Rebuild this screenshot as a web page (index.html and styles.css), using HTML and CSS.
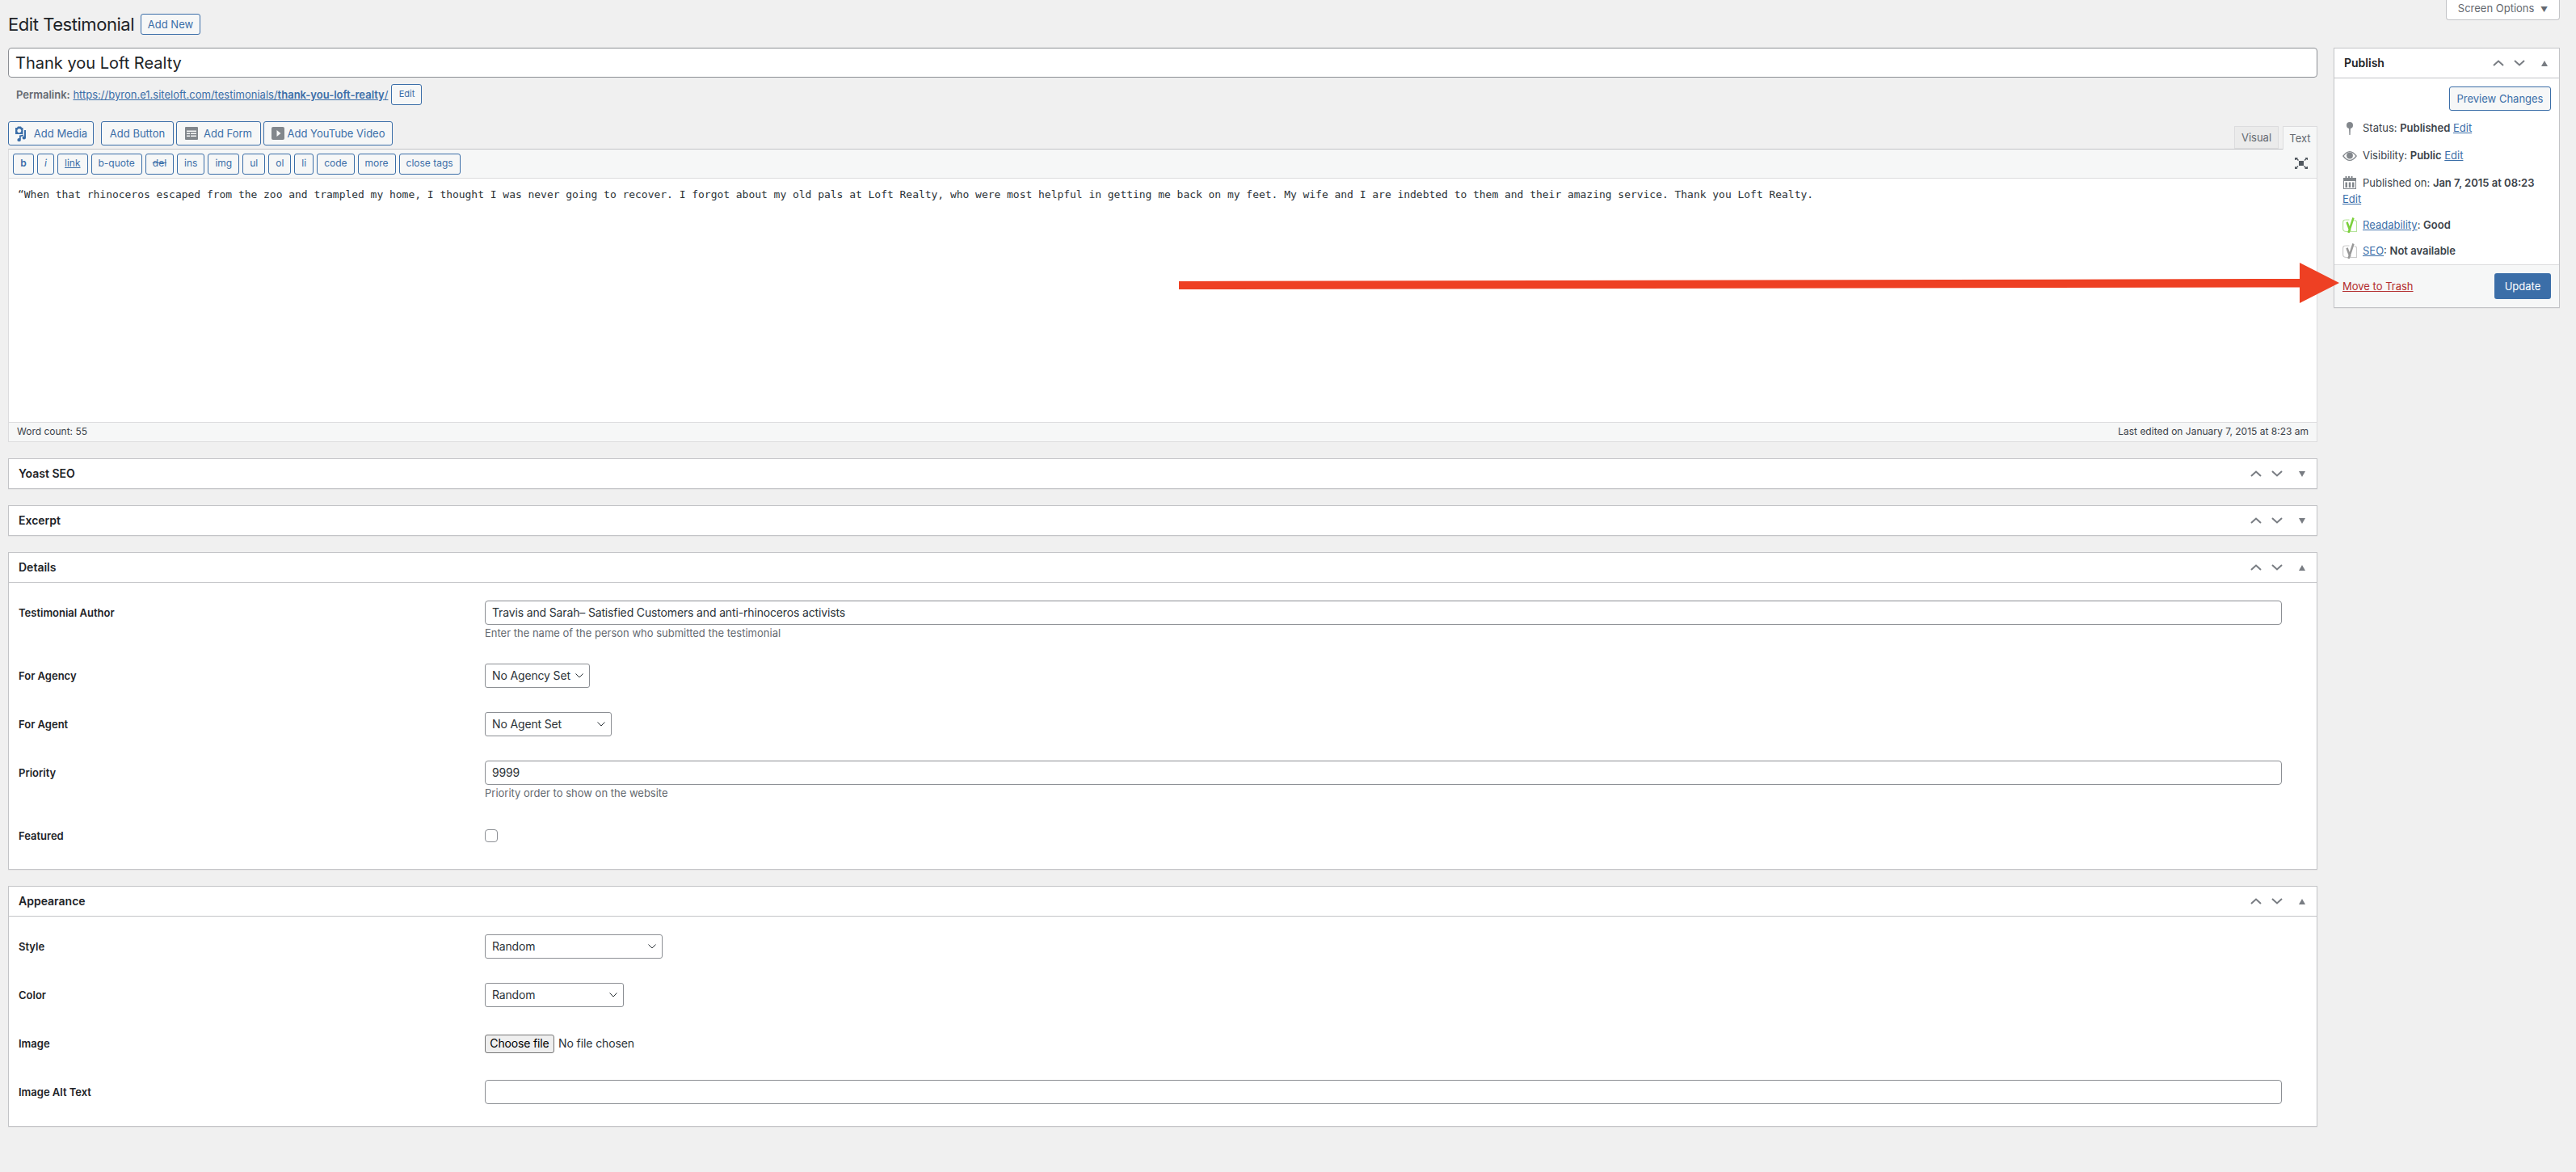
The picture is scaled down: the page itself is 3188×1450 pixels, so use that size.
FILE: index.html
```html
<!DOCTYPE html>
<html lang="en">
<head>
<meta charset="utf-8">
<title>Edit Testimonial</title>
<link rel="stylesheet" href="styles.css">
</head>
<body>
<div class="screen-meta"><button class="screen-options">Screen Options <span class="caret">▼</span></button></div>
<header class="page-head"><h1>Edit Testimonial</h1><a class="btn add-new">Add New</a></header>
<div class="columns">
  <main class="main">
    <div class="title-input">Thank you Loft Realty</div>
    <div class="permalink"><span><b>Permalink:</b> <a class="link">https://byron.e1.siteloft.com/testimonials/<b>thank-you-loft-realty</b>/</a></span><a class="btn small edit-slug">Edit</a></div>
    <div class="editor-head">
      <div class="media-buttons">
        <a class="btn media add-media"><svg class="mi" viewBox="0 0 16 20" width="16" height="20"><path fill="#3b6ea8" fill-rule="evenodd" d="M1 3h2l1-1.500h4L9 3h1.500v8H1zM5.800 4.300a2.500 2.500 0 1 0 .01 0z"/><path fill="#3b6ea8" d="M12 6h2v9.500a2.200 2 0 1 1-2-2zM6 12.500l5-1v1.800l-3.200.7v4a2.200 2 0 1 1-1.800-1.900z"/></svg>Add Media</a>
        <a class="btn media add-button">Add Button</a>
        <a class="btn media add-form"><svg class="mi" viewBox="0 0 16 16" width="16" height="16"><rect width="16" height="16" rx="1" fill="#82878c"/><path fill="#f6f7f7" d="M2 4.500h12V6H2zM2 7.500h4V9H2zM7 7.500h7V9H7zM2 10.500h4V12H2zM7 10.500h7V12H7z"/></svg>Add Form</a>
        <a class="btn media add-yt"><svg class="mi" viewBox="0 0 16 16" width="16" height="16"><rect width="16" height="16" rx="2" fill="#82878c"/><path fill="#f6f7f7" d="M6.500 4l5 4-5 4z"/></svg>Add YouTube Video</a>
      </div>
      <div class="tabs"><span class="tab">Visual</span><span class="tab active">Text</span></div>
    </div>
    <div class="editor">
      <div class="toolbar">
        <a class="qt b-b">b</a><a class="qt b-i">i</a><a class="qt b-u">link</a><a class="qt">b-quote</a><a class="qt b-s">del</a><a class="qt">ins</a><a class="qt">img</a><a class="qt">ul</a><a class="qt">ol</a><a class="qt">li</a><a class="qt">code</a><a class="qt">more</a><a class="qt">close tags</a>
        <svg class="fullscreen" viewBox="0 0 16 14" width="16" height="14"><path fill="#50575e" d="M5 4h6v6H5zM0 0h4L3 1l2 2-1 1-2-2-1 1H0zM16 0v3h-.5l-1-1-2 2-1-1 2-2-1-1zM0 14v-3h.5l1 1 2-2 1 1-2 2 1 1zM16 14h-4l1-1-2-2 1-1 2 2 1-1h1z"/></svg>
      </div>
      <div class="editor-text">“When that rhinoceros escaped from the zoo and trampled my home, I thought I was never going to recover. I forgot about my old pals at Loft Realty, who were most helpful in getting me back on my feet. My wife and I are indebted to them and their amazing service. Thank you Loft Realty.</div>
      <div class="status"><span>Word count: 55</span><span>Last edited on January 7, 2015 at 8:23 am</span></div>
    </div>

    <section class="box collapsed"><div class="box-head"><h2>Yoast SEO</h2><div class="handles"><svg class="h" viewBox="0 0 14 8"><path d="M1 7l6-5.500L13 7"/></svg><svg class="h" viewBox="0 0 14 8"><path d="M1 1l6 5.500L13 1"/></svg><span class="tri down"></span></div></div></section>
    <section class="box collapsed"><div class="box-head"><h2>Excerpt</h2><div class="handles"><svg class="h" viewBox="0 0 14 8"><path d="M1 7l6-5.500L13 7"/></svg><svg class="h" viewBox="0 0 14 8"><path d="M1 1l6 5.500L13 1"/></svg><span class="tri down"></span></div></div></section>

    <section class="box">
      <div class="box-head"><h2>Details</h2><div class="handles"><svg class="h" viewBox="0 0 14 8"><path d="M1 7l6-5.500L13 7"/></svg><svg class="h" viewBox="0 0 14 8"><path d="M1 1l6 5.500L13 1"/></svg><span class="tri up"></span></div></div>
      <div class="fields details">
        <label>Testimonial Author</label>
        <div class="field"><div class="input">Travis and Sarah– Satisfied Customers and anti-rhinoceros activists</div><p class="hint">Enter the name of the person who submitted the testimonial</p></div>
        <label>For Agency</label>
        <div class="field"><div class="select w-agency">No Agency Set<svg class="chev" viewBox="0 0 10 6"><path d="M.5.5L5 5 9.500.5"/></svg></div></div>
        <label>For Agent</label>
        <div class="field"><div class="select w-agent">No Agent Set<svg class="chev" viewBox="0 0 10 6"><path d="M.5.5L5 5 9.500.5"/></svg></div></div>
        <label>Priority</label>
        <div class="field"><div class="input">9999</div><p class="hint">Priority order to show on the website</p></div>
        <label>Featured</label>
        <div class="field center"><span class="check"></span></div>
      </div>
    </section>

    <section class="box">
      <div class="box-head"><h2>Appearance</h2><div class="handles"><svg class="h" viewBox="0 0 14 8"><path d="M1 7l6-5.500L13 7"/></svg><svg class="h" viewBox="0 0 14 8"><path d="M1 1l6 5.500L13 1"/></svg><span class="tri up"></span></div></div>
      <div class="fields appearance">
        <label>Style</label>
        <div class="field"><div class="select w-style">Random<svg class="chev" viewBox="0 0 10 6"><path d="M.5.5L5 5 9.500.5"/></svg></div></div>
        <label>Color</label>
        <div class="field"><div class="select w-color">Random<svg class="chev" viewBox="0 0 10 6"><path d="M.5.5L5 5 9.500.5"/></svg></div></div>
        <label>Image</label>
        <div class="field center"><span class="choose">Choose file</span><span class="nofile">No file chosen</span></div>
        <label>Image Alt Text</label>
        <div class="field"><div class="input"></div></div>
      </div>
    </section>
  </main>

  <aside class="side">
    <section class="publish">
      <div class="box-head"><h2>Publish</h2><div class="handles"><svg class="h" viewBox="0 0 14 8"><path d="M1 7l6-5.500L13 7"/></svg><svg class="h" viewBox="0 0 14 8"><path d="M1 1l6 5.500L13 1"/></svg><span class="tri up"></span></div></div>
      <div class="preview-row"><a class="btn preview">Preview Changes</a></div>
      <div class="misc">
        <div class="mrow"><svg class="mic" viewBox="0 0 18 20"><circle cx="9" cy="7" r="4" fill="#82878c"/><path fill="#82878c" d="M8 9h2l-.4 10h-1.200z"/></svg>Status: <b>Published</b> <a class="link">Edit</a></div>
        <div class="mrow"><svg class="mic" viewBox="0 0 18 20"><path fill="#82878c" fill-rule="evenodd" d="M0 11C3 7 6 5 9 5s6 2 9 6c-3 4-6 6-9 6s-6-2-9-6zM1.800 11C4 14 6.500 15.700 9 15.700S14 14 16.200 11C14 8 11.500 6.300 9 6.300S4 8 1.800 11z"/><circle cx="9" cy="10.500" r="3.900" fill="#82878c"/></svg>Visibility: <b>Public</b> <a class="link">Edit</a></div>
        <div class="mrow"><svg class="mic" viewBox="0 0 18 20"><path fill="#82878c" fill-rule="evenodd" d="M1 4h2.500V2h2v2h1.500V2h2v2h1.500V2h2v2H17v14H1zM2 8v9h14V8zM3.500 9.500h2.500v6.500H3.500zM7.800 9.500h2.500v6.500H7.800zM12 9.500h2.500v6.500H12z"/></svg>Published on: <b>Jan 7, 2015 at 08:23</b><br><a class="link">Edit</a></div>
        <div class="mrow yoast"><svg class="mic" viewBox="0 0 18 20"><path fill="none" stroke="#b5e39a" stroke-width="1.200" d="M3.500 4h5M14.500 4.500c2 0 3 1 3 2.500v11.500H5C2 18.500.6 17 .6 15V7c0-2 1-3 3-3"/><path fill="none" stroke="#7ad03a" stroke-width="2.500" d="M5.500 6.700l4 11M13.500 1.500L7.500 20"/></svg><span><a class="link">Readability</a>: <b>Good</b></span></div>
        <div class="mrow yoast"><svg class="mic" viewBox="0 0 18 20"><path fill="none" stroke="#ccc" stroke-width="1.200" d="M3.500 4h5M14.500 4.500c2 0 3 1 3 2.500v11.500H5C2 18.500.6 17 .6 15V7c0-2 1-3 3-3"/><path fill="none" stroke="#999" stroke-width="2.500" d="M5.500 6.700l4 11M13.500 1.500L7.500 20"/></svg><span><a class="link">SEO</a>: <b>Not available</b></span></div>
      </div>
      <div class="actions"><a class="trash">Move to Trash</a><a class="update">Update</a></div>
    </section>
  </aside>
</div>
<svg class="arrow" viewBox="0 0 1440 54" width="1440" height="54"><path fill="#ee4023" d="M3 23L1390 20V0l49 25-49 25V30.500L3 33z"/></svg>
</body>
</html>
```

FILE: styles.css
```css
* { box-sizing: border-box; }
html, body { margin: 0; padding: 0; }
body {
  position: relative;
  min-height: 1450px;
  background: #f0f0f0;
  color: #3c434a;
  font: 13px/1.4 Inter, "Liberation Sans", sans-serif;
  overflow: hidden;
}
a { text-decoration: none; }
b { font-weight: 600; }
h1, h2, p { margin: 0; }

.screen-meta { display: flex; justify-content: flex-end; height: 0; padding-right: 20px; }
.screen-options {
  height: 25px; width: 141px; margin: 0; padding: 0 0 4px;
  background: #fff; border: 1px solid #c3c4c7; border-top: 0; border-radius: 0 0 4px 4px;
  color: #646970; font: 13px Inter, sans-serif;
  flex: none;
}
.caret { font-size: 9px; margin-left: 4px; }

.btn {
  display: inline-flex; align-items: center; justify-content: center;
  border: 1px solid #3b6ea8; border-radius: 3px;
  background: #f6f7f7; color: #3b6ea8;
}
.page-head { display: flex; align-items: center; height: 59px; padding: 0 0 0 10px; }
.page-head h1 { font-size: 22px; font-weight: 400; letter-spacing: -.45px; color: #1d2327; width: 164px; margin-top: 1px; white-space: nowrap; }
.add-new { width: 74px; height: 26px; margin-top: 1px; }

.columns { display: flex; gap: 20px; padding: 0 20px 0 10px; }
.main { flex: 1; min-width: 0; }
.side { width: 280px; flex: none; }

.title-input {
  height: 37px; padding: 0 8px;
  display: flex; align-items: center;
  background: #fff; border: 1px solid #8c8f94; border-radius: 4px;
  font-size: 20px; color: #1d2327;
}
.permalink { display: flex; align-items: center; height: 26px; margin-top: 8px; padding-left: 10px; white-space: pre; color: #646970; }
.link { color: #3b6ea8; text-decoration: underline; }
.small { font-size: 11px; }
.edit-slug { width: 38px; height: 26px; margin-left: 4px; }

.editor-head { display: flex; justify-content: space-between; align-items: flex-end; height: 54px; }
.media-buttons { display: flex; height: 30px; align-self: flex-end; margin-bottom: 4px; }
.media { height: 30px; gap: 4px; white-space: nowrap; }
.add-media { width: 106px; margin-right: 9px; gap: 8px; }
.add-button { width: 90px; margin-right: 3px; }
.add-form { width: 105px; margin-right: 3px; gap: 7px; }
.add-yt { width: 160px; }
.mi { flex: none; }
.tabs { display: flex; gap: 5px; }
.tab {
  display: flex; align-items: center; justify-content: center;
  height: 28px; width: 55px; background: #ebebeb; border: 1px solid #dcdcde; color: #646970;
}
.tab.active { width: 43px; height: 29px; background: #f6f7f7; border-bottom: 0; margin-bottom: -1px; position: relative; z-index: 1; }

.editor { border: 1px solid #dcdcde; background: #fff; border-top-color: #c3c4c7; }
.toolbar { position: relative; display: flex; gap: 4px; align-items: center; height: 36px; padding: 0 5px; background: #f6f7f7; border-bottom: 1px solid #dcdcde; }
.qt {
  display: flex; align-items: center; justify-content: center;
  height: 26px; padding: 0 8px;
  background: #f6f7f7; border: 1px solid #3b6ea8; border-radius: 3px; color: #3b6ea8; font-size: 12px;
}
.b-b { font-weight: 600; width: 26px; }
.b-i { font-style: italic; width: 21px; }
.b-u { text-decoration: underline; }
.b-s { text-decoration: line-through; }
.fullscreen { position: absolute; right: 11px; top: 10px; }
.editor-text { height: 301px; padding: 10px 11px; font: 13px/20px "DejaVu Sans Mono", monospace; letter-spacing: -.03px; color: #2c3338; white-space: nowrap; overflow: hidden; }
.status { display: flex; justify-content: space-between; align-items: center; height: 24px; padding: 0 10px; background: #f6f7f7; border-top: 1px solid #dcdcde; font-size: 12px; color: #3c434a; }

.box { background: #fff; border: 1px solid #c3c4c7; box-shadow: 0 1px 1px rgba(0,0,0,.04); margin-top: 20px; }
.box-head { display: flex; align-items: center; justify-content: space-between; height: 37px; padding: 0 12px; border-bottom: 1px solid #c3c4c7; }
.collapsed .box-head { height: 36px; border-bottom: 0; }
.box-head h2 { font-size: 14px; font-weight: 600; color: #1d2327; }
.handles { display: flex; align-items: center; }
.h { width: 14px; height: 8px; fill: none; stroke: #787c82; stroke-width: 2; margin-left: 12px; }
.tri { width: 0; height: 0; border-left: 4px solid transparent; border-right: 4px solid transparent; margin: 0 2px 0 20px; }
.tri.down { border-top: 7px solid #787c82; }
.tri.up { border-bottom: 7px solid #787c82; }

.fields { display: grid; grid-template-columns: 577px 2224px; row-gap: 30px; padding: 22px 0 26px 12px; }
.appearance { padding-bottom: 27px; }
.fields label { font-weight: 600; color: #1d2327; line-height: 30px; }
.field.center { display: flex; align-items: center; min-height: 30px; }
.input { height: 30px; padding: 0 8px; display: flex; align-items: center; background: #fff; border: 1px solid #8c8f94; border-radius: 4px; color: #2c3338; font-size: 14px; letter-spacing: -.15px; white-space: nowrap; }
.hint { height: 18px; line-height: 20px; color: #646970; white-space: nowrap; }
.select { position: relative; height: 30px; padding: 0 8px; display: flex; align-items: center; background: #fff; border: 1px solid #8c8f94; border-radius: 3px; color: #2c3338; font-size: 14px; letter-spacing: -.15px; white-space: nowrap; }
.chev { position: absolute; right: 7px; top: 11px; width: 10px; height: 6px; fill: none; stroke: #2c3338; stroke-width: 1; }
.w-agency { width: 130px; }
.w-agent { width: 157px; }
.w-style { width: 220px; }
.w-color { width: 172px; }
.check { width: 16px; height: 16px; border: 1px solid #8c8f94; border-radius: 4px; background: #fff; }
.choose { display: flex; align-items: center; justify-content: center; width: 86px; height: 23px; background: #efefef; border: 1px solid #767676; border-radius: 3px; color: #000; font-size: 14px; letter-spacing: -.15px; white-space: nowrap; }
.nofile { margin-left: 5px; font-size: 14px; letter-spacing: -.1px; color: #2c3338; }

.publish { background: #fff; border: 1px solid #c3c4c7; box-shadow: 0 1px 1px rgba(0,0,0,.04); }
.preview-row { display: flex; justify-content: flex-end; padding: 10px 10px 0; }
.preview { width: 126px; height: 30px; }
.misc { padding: 11px 10px 0; height: 190px; }
.mrow { position: relative; padding-left: 25px; line-height: 20px; margin-top: 14px; }
.mrow:first-child { margin-top: 0; }
.mrow br + a { margin-left: -25px; }
.mic { position: absolute; left: 0; top: 0; width: 18px; height: 20px; }
.yoast { margin-top: 12px; }
.actions { display: flex; justify-content: space-between; align-items: center; height: 53px; padding: 0 10px; background: #f6f7f7; border-top: 1px solid #dcdcde; }
.trash { color: #b32d2e; text-decoration: underline; }
.update { display: flex; align-items: center; justify-content: center; width: 70px; height: 32px; background: #3b6ea8; border-radius: 3px; color: #fff; }

.arrow { position: absolute; left: 1456px; top: 325px; }
```
